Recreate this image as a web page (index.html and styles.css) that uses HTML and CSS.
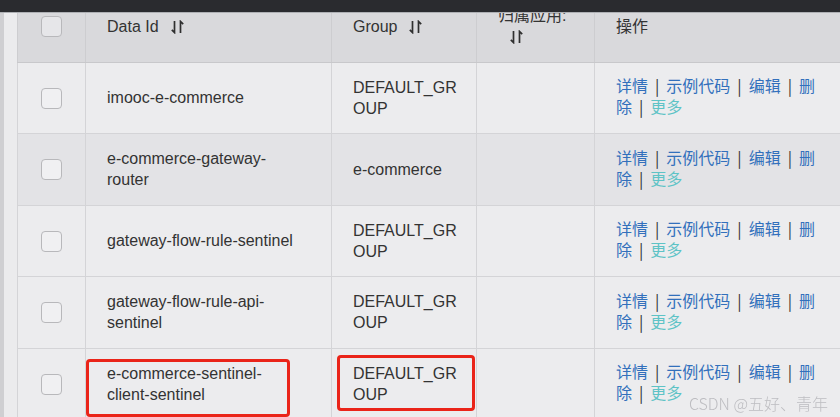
FILE: index.html
```html
<!DOCTYPE html>
<html lang="zh">
<head>
<meta charset="utf-8">
<title>配置列表</title>
<link rel="stylesheet" href="styles.css">
</head>
<body>
<div class="topbar"></div>
<div class="page">
  <div class="edge"></div>
  <div class="gutter"></div>
  <div class="content">
    <table class="grid">
      <colgroup>
        <col class="c-check">
        <col class="c-id">
        <col class="c-group">
        <col class="c-app">
        <col class="c-ops">
      </colgroup>
      <thead>
        <tr>
          <th class="check"><span class="cb head-cb"></span></th>
          <th class="id">Data Id<svg class="sort" viewBox="0 0 13 14" width="13" height="14"><path d="M3.5 1V12.5L0.8 9.8M9.5 13V1.5L12.2 4.2" fill="none" stroke="#2f2f2f" stroke-width="1.7"/></svg></th>
          <th class="group">Group<svg class="sort" viewBox="0 0 13 14" width="13" height="14"><path d="M3.5 1V12.5L0.8 9.8M9.5 13V1.5L12.2 4.2" fill="none" stroke="#2f2f2f" stroke-width="1.7"/></svg></th>
          <th class="app">归属应用:<svg class="sort" viewBox="0 0 13 14" width="13" height="14"><path d="M3.5 1V12.5L0.8 9.8M9.5 13V1.5L12.2 4.2" fill="none" stroke="#2f2f2f" stroke-width="1.7"/></svg></th>
          <th class="ops">操作</th>
        </tr>
      </thead>
      <tbody>
        <tr>
          <td class="check"><span class="cb"></span></td>
          <td class="id">imooc-e-commerce</td>
          <td class="group">DEFAULT_GROUP</td>
          <td class="app"></td>
          <td class="ops"><a>详情</a><span class="sep">|</span><a>示例代码</a><span class="sep">|</span><a>编辑</a><span class="sep">|</span><a>删除</a><span class="sep">|</span><a class="more">更多</a></td>
        </tr>
        <tr class="hover">
          <td class="check"><span class="cb"></span></td>
          <td class="id">e-commerce-gateway-router</td>
          <td class="group">e-commerce</td>
          <td class="app"></td>
          <td class="ops"><a>详情</a><span class="sep">|</span><a>示例代码</a><span class="sep">|</span><a>编辑</a><span class="sep">|</span><a>删除</a><span class="sep">|</span><a class="more">更多</a></td>
        </tr>
        <tr>
          <td class="check"><span class="cb"></span></td>
          <td class="id">gateway-flow-rule-sentinel</td>
          <td class="group">DEFAULT_GROUP</td>
          <td class="app"></td>
          <td class="ops"><a>详情</a><span class="sep">|</span><a>示例代码</a><span class="sep">|</span><a>编辑</a><span class="sep">|</span><a>删除</a><span class="sep">|</span><a class="more">更多</a></td>
        </tr>
        <tr>
          <td class="check"><span class="cb"></span></td>
          <td class="id">gateway-flow-rule-api-sentinel</td>
          <td class="group">DEFAULT_GROUP</td>
          <td class="app"></td>
          <td class="ops"><a>详情</a><span class="sep">|</span><a>示例代码</a><span class="sep">|</span><a>编辑</a><span class="sep">|</span><a>删除</a><span class="sep">|</span><a class="more">更多</a></td>
        </tr>
        <tr>
          <td class="check"><span class="cb"></span></td>
          <td class="id marked">e-commerce-sentinel-client-sentinel<span class="mark mark-id"></span></td>
          <td class="group marked">DEFAULT_GROUP<span class="mark mark-group"></span></td>
          <td class="app"></td>
          <td class="ops"><a>详情</a><span class="sep">|</span><a>示例代码</a><span class="sep">|</span><a>编辑</a><span class="sep">|</span><a>删除</a><span class="sep">|</span><a class="more">更多</a></td>
        </tr>
      </tbody>
    </table>
  </div>
</div>
<div class="watermark">CSDN @五好、青年</div>
</body>
</html>
```
FILE: styles.css
```css
html, body {
  margin: 0;
  padding: 0;
  width: 840px;
  height: 417px;
  overflow: hidden;
  background: #ebebed;
  font-family: "Liberation Sans", "Noto Sans CJK SC", sans-serif;
  font-size: 16px;
  color: #333;
}

.topbar {
  position: fixed;
  top: 0;
  left: 0;
  right: 0;
  height: 12px;
  background: #2a2b2f;
  border-bottom: 1px solid #aeb0b4;
  z-index: 5;
}

.page {
  display: flex;
  height: 417px;
  overflow: hidden;
}

.edge {
  width: 4px;
  flex: none;
  background: #cfcfd2;
}

.gutter {
  width: 13px;
  flex: none;
  background: #ebebed;
}

.content {
  flex: 1;
  overflow: hidden;
}

.grid {
  margin-top: -10px;
  table-layout: fixed;
  border-collapse: collapse;
  width: 827px;
}

.c-check { width: 68px; }
.c-id { width: 246px; }
.c-group { width: 145px; }
.c-app { width: 118px; }
.c-ops { width: 250px; }

.grid th,
.grid td {
  border: 1px solid #d4d4d7;
  vertical-align: middle;
  text-align: left;
  line-height: 21px;
  padding: 0 21px;
  overflow-wrap: normal;
}

.grid tr {
  height: 71.5px;
}

.grid th {
  background: #d9d9dc;
  font-weight: normal;
  border-color: #cdcdd0;
  border-bottom-color: #c8c8cb;
}

.grid td {
  background: #ececee;
}

.grid tr.hover td {
  background: #e3e3e6;
}

.grid .check {
  padding: 0;
  text-align: center;
}

.grid .id { padding-right: 34px; }
.grid .group { padding-right: 13px; word-break: break-all; }
.grid .app { padding-right: 21px; }
.grid td.ops {
  padding-right: 23px;
  padding-bottom: 3px;
  font-family: "Noto Sans CJK SC", sans-serif;
  line-height: 21px;
}

.cb {
  display: inline-block;
  width: 19px;
  height: 19px;
  border: 1px solid #b8b8bb;
  border-radius: 4px;
  background: #f0f0f2;
  vertical-align: middle;
}

.head-cb {
  background: #e6e6e9;
  margin-top: -3px;
}

.sort {
  margin-left: 12px;
  vertical-align: -2px;
}

.ops a {
  color: #3270bc;
}

.ops a.more {
  color: #5ec3c6;
}

.sep {
  margin: 0 7px;
  color: #333;
}

.marked {
  position: relative;
}

.mark {
  position: absolute;
  border: 3px solid #ea2419;
  border-radius: 4px;
  box-sizing: border-box;
  pointer-events: none;
}

.mark-id {
  left: 0;
  top: 10px;
  width: 204px;
  height: 58px;
}

.mark-group {
  left: 5px;
  top: 6px;
  width: 138px;
  height: 56px;
}

.watermark {
  position: fixed;
  right: 12px;
  bottom: 6px;
  font-family: "Noto Sans CJK SC", sans-serif;
  font-weight: 300;
  font-size: 16px;
  line-height: 1;
  color: #bdbdc1;
}
```
